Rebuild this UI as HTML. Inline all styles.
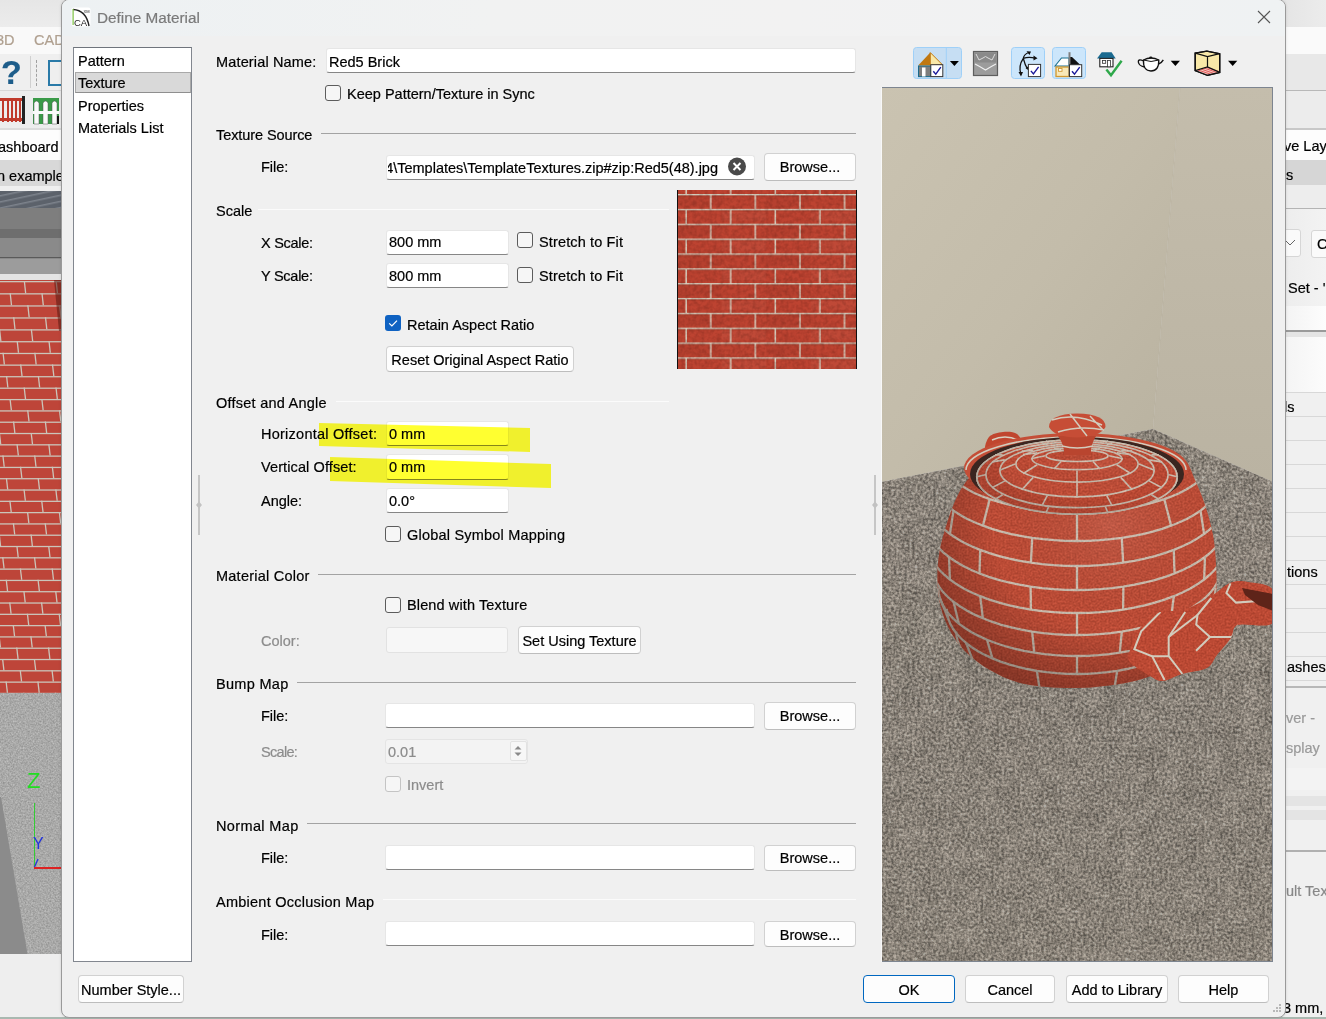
<!DOCTYPE html><html><head><meta charset="utf-8"><style>
html,body{margin:0;padding:0;}
body{width:1326px;height:1019px;overflow:hidden;position:relative;background:#e9e9e9;font-family:"Liberation Sans",sans-serif;font-size:14.5px;color:#000;}
.t{position:absolute;line-height:17px;white-space:pre;-webkit-text-stroke:0.2px currentColor;}
</style></head><body>
<div style="position:absolute;left:0;top:0;width:70px;height:1019px;overflow:hidden">
<div style="position:absolute;left:0px;top:0px;width:70px;height:27px;background:linear-gradient(#e6e6e6,#ececec);"></div>
<div style="position:absolute;left:0px;top:27px;width:70px;height:27px;background:#f9f9f9;"></div>
<div class="t" style="left:-4px;top:32px;color:#b0a090;">3D</div>
<div class="t" style="left:34px;top:32px;color:#b0a090;">CAD</div>
<div style="position:absolute;left:0px;top:54px;width:70px;height:36px;background:#efefef;"></div>
<div class="t" style="left:1px;top:53px;font-size:34px;line-height:38px;font-weight:bold;color:#1d5d8a">?</div>
<div style="position:absolute;left:30px;top:56px;width:1px;height:32px;background:#d0d0d0;"></div>
<div style="position:absolute;left:36px;top:60px;width:1px;height:26px;border-left:1px dashed #a0a0a0;"></div>
<div style="position:absolute;left:48px;top:60px;width:22px;height:26px;border:2px solid #2a7aa8;border-right:none;box-sizing:border-box;"></div>
<div style="position:absolute;left:0px;top:90px;width:70px;height:1px;background:#d8d8d8;"></div>
<div style="position:absolute;left:0px;top:91px;width:70px;height:37px;background:#ededed;"></div>
<svg style="position:absolute;left:0;top:96px" width="26" height="30"><rect x="0" y="2" width="24" height="3" fill="#c0392b"/><rect x="0" y="22" width="24" height="3" fill="#c0392b"/><rect x="2" y="2" width="2" height="24" fill="#c0392b"/><rect x="7" y="2" width="2" height="24" fill="#c0392b"/><rect x="11" y="2" width="2" height="24" fill="#c0392b"/><rect x="15" y="2" width="2" height="24" fill="#c0392b"/><rect x="19" y="2" width="2" height="24" fill="#c0392b"/><rect x="22" y="0" width="3" height="28" fill="#222"/></svg>
<svg style="position:absolute;left:33px;top:98px" width="28" height="28"><rect x="0" y="0" width="26" height="26" fill="#3a9a48"/><path d="M1 26 L1 5 Q3.5 1 6 5 L6 26 Z" fill="#fafafa" stroke="#555" stroke-width="0.5"/><path d="M10 26 L10 5 Q12.5 1 15 5 L15 26 Z" fill="#fafafa" stroke="#555" stroke-width="0.5"/><path d="M19 26 L19 5 Q21.5 1 24 5 L24 26 Z" fill="#fafafa" stroke="#555" stroke-width="0.5"/><rect x="0" y="13" width="26" height="3" fill="#fafafa"/><rect x="24" y="18" width="2" height="8" fill="#111"/></svg>
<div style="position:absolute;left:0px;top:128px;width:70px;height:2px;background:#dcdcdc;"></div>
<div style="position:absolute;left:0px;top:130px;width:70px;height:30px;background:#fdfdfd;"></div>
<div class="t" style="left:-2px;top:139px;">ashboard</div>
<div style="position:absolute;left:0px;top:160px;width:70px;height:26px;background:#d8d8d8;"></div>
<div class="t" style="left:-3px;top:168px;">n example</div>
<div style="position:absolute;left:0px;top:186px;width:70px;height:5px;background:#efefef;"></div>
<svg style="position:absolute;left:0;top:191px" width="70" height="830"><defs><pattern id="roofp" width="10" height="6" patternUnits="userSpaceOnUse" patternTransform="rotate(-12)"><rect width="10" height="6" fill="#5c626b"/><rect y="4" width="10" height="1.5" fill="#7d838c"/></pattern><pattern id="brickL2" width="68" height="25" patternUnits="userSpaceOnUse" x="0" y="89"><rect width="68" height="25" fill="#bb4a38"/><rect x="0" y="1.88" width="34.00" height="8.75" fill="#000" opacity="0.04"/><rect x="34.00" y="15.00" width="34.00" height="7.50" fill="#fff" opacity="0.03"/><rect x="0" y="0.00" width="68" height="1.3" fill="#d2cbc0"/><rect x="0" y="1.30" width="68" height="0.7" fill="#6a2418" opacity="0.5"/><rect x="0" y="12.50" width="68" height="1.3" fill="#d2cbc0"/><rect x="0" y="13.80" width="68" height="0.7" fill="#6a2418" opacity="0.5"/><rect x="12.00" y="0" width="1.3" height="12.50" fill="#d2cbc0"/><rect x="46.00" y="0" width="1.3" height="12.50" fill="#d2cbc0"/><rect x="29.00" y="12.50" width="1.3" height="12.50" fill="#d2cbc0"/><rect x="63.00" y="12.50" width="1.3" height="12.50" fill="#d2cbc0"/></pattern></defs><rect x="0" y="0" width="70" height="17" fill="url(#roofp)"/><rect x="0" y="17" width="70" height="30" fill="#7e7e7e"/><rect x="0" y="38" width="70" height="9" fill="#6e6e6e"/><rect x="0" y="47" width="70" height="21" fill="#8a8a8a"/><rect x="0" y="66" width="70" height="1" fill="#5a5a5a"/><rect x="0" y="68" width="70" height="15" fill="#9c9c9c"/><rect x="0" y="83" width="70" height="6" fill="#e4e4e4"/><rect x="0" y="89" width="70" height="413" fill="#bd4539"/><rect x="0" y="90.00" width="70" height="1.3" fill="#cbc5ba"/><rect x="0" y="91.30" width="70" height="10.90" fill="#e05040" opacity="0.00"/><path d="M-8.10 90.00 L-6.80 90.00 L-5.50 102.20 L-6.80 102.20 Z" fill="#cbc5ba"/><path d="M23.70 90.00 L25.00 90.00 L26.30 102.20 L25.00 102.20 Z" fill="#cbc5ba"/><path d="M55.50 90.00 L56.80 90.00 L58.10 102.20 L56.80 102.20 Z" fill="#cbc5ba"/><rect x="0" y="102.20" width="70" height="1.3" fill="#cbc5ba"/><rect x="0" y="103.50" width="70" height="10.81" fill="#e05040" opacity="0.02"/><path d="M-22.25 102.20 L-20.95 102.20 L-19.65 114.31 L-20.95 114.31 Z" fill="#cbc5ba"/><path d="M9.55 102.20 L10.85 102.20 L12.15 114.31 L10.85 114.31 Z" fill="#cbc5ba"/><path d="M41.35 102.20 L42.65 102.20 L43.95 114.31 L42.65 114.31 Z" fill="#cbc5ba"/><rect x="0" y="114.31" width="70" height="1.3" fill="#cbc5ba"/><rect x="0" y="115.61" width="70" height="10.72" fill="#e05040" opacity="0.04"/><path d="M-4.60 114.31 L-3.30 114.31 L-2.00 126.33 L-3.30 126.33 Z" fill="#cbc5ba"/><path d="M27.20 114.31 L28.50 114.31 L29.80 126.33 L28.50 126.33 Z" fill="#cbc5ba"/><path d="M59.00 114.31 L60.30 114.31 L61.60 126.33 L60.30 126.33 Z" fill="#cbc5ba"/><rect x="0" y="126.33" width="70" height="1.3" fill="#cbc5ba"/><rect x="0" y="127.63" width="70" height="10.63" fill="#e05040" opacity="0.06"/><path d="M-18.75 126.33 L-17.45 126.33 L-16.15 138.25 L-17.45 138.25 Z" fill="#cbc5ba"/><path d="M13.05 126.33 L14.35 126.33 L15.65 138.25 L14.35 138.25 Z" fill="#cbc5ba"/><path d="M44.85 126.33 L46.15 126.33 L47.45 138.25 L46.15 138.25 Z" fill="#cbc5ba"/><rect x="0" y="138.25" width="70" height="1.3" fill="#cbc5ba"/><rect x="0" y="139.55" width="70" height="10.54" fill="#e05040" opacity="0.01"/><path d="M-1.10 138.25 L0.20 138.25 L1.50 150.09 L0.20 150.09 Z" fill="#cbc5ba"/><path d="M30.70 138.25 L32.00 138.25 L33.30 150.09 L32.00 150.09 Z" fill="#cbc5ba"/><path d="M62.50 138.25 L63.80 138.25 L65.10 150.09 L63.80 150.09 Z" fill="#cbc5ba"/><rect x="0" y="150.09" width="70" height="1.3" fill="#cbc5ba"/><rect x="0" y="151.39" width="70" height="10.45" fill="#e05040" opacity="0.03"/><path d="M-15.25 150.09 L-13.95 150.09 L-12.65 161.84 L-13.95 161.84 Z" fill="#cbc5ba"/><path d="M16.55 150.09 L17.85 150.09 L19.15 161.84 L17.85 161.84 Z" fill="#cbc5ba"/><path d="M48.35 150.09 L49.65 150.09 L50.95 161.84 L49.65 161.84 Z" fill="#cbc5ba"/><rect x="0" y="161.84" width="70" height="1.3" fill="#cbc5ba"/><rect x="0" y="163.14" width="70" height="10.36" fill="#e05040" opacity="0.05"/><path d="M-29.40 161.84 L-28.10 161.84 L-26.80 173.50 L-28.10 173.50 Z" fill="#cbc5ba"/><path d="M2.40 161.84 L3.70 161.84 L5.00 173.50 L3.70 173.50 Z" fill="#cbc5ba"/><path d="M34.20 161.84 L35.50 161.84 L36.80 173.50 L35.50 173.50 Z" fill="#cbc5ba"/><path d="M66.00 161.84 L67.30 161.84 L68.60 173.50 L67.30 173.50 Z" fill="#cbc5ba"/><rect x="0" y="173.50" width="70" height="1.3" fill="#cbc5ba"/><rect x="0" y="174.80" width="70" height="10.27" fill="#e05040" opacity="0.00"/><path d="M-11.75 173.50 L-10.45 173.50 L-9.15 185.08 L-10.45 185.08 Z" fill="#cbc5ba"/><path d="M20.05 173.50 L21.35 173.50 L22.65 185.08 L21.35 185.08 Z" fill="#cbc5ba"/><path d="M51.85 173.50 L53.15 173.50 L54.45 185.08 L53.15 185.08 Z" fill="#cbc5ba"/><rect x="0" y="185.08" width="70" height="1.3" fill="#cbc5ba"/><rect x="0" y="186.38" width="70" height="10.19" fill="#e05040" opacity="0.02"/><path d="M-25.90 185.08 L-24.60 185.08 L-23.30 196.56 L-24.60 196.56 Z" fill="#cbc5ba"/><path d="M5.90 185.08 L7.20 185.08 L8.50 196.56 L7.20 196.56 Z" fill="#cbc5ba"/><path d="M37.70 185.08 L39.00 185.08 L40.30 196.56 L39.00 196.56 Z" fill="#cbc5ba"/><path d="M69.50 185.08 L70.80 185.08 L72.10 196.56 L70.80 196.56 Z" fill="#cbc5ba"/><rect x="0" y="196.56" width="70" height="1.3" fill="#cbc5ba"/><rect x="0" y="197.86" width="70" height="10.10" fill="#e05040" opacity="0.04"/><path d="M-8.25 196.56 L-6.95 196.56 L-5.65 207.96 L-6.95 207.96 Z" fill="#cbc5ba"/><path d="M23.55 196.56 L24.85 196.56 L26.15 207.96 L24.85 207.96 Z" fill="#cbc5ba"/><path d="M55.35 196.56 L56.65 196.56 L57.95 207.96 L56.65 207.96 Z" fill="#cbc5ba"/><rect x="0" y="207.96" width="70" height="1.3" fill="#cbc5ba"/><rect x="0" y="209.26" width="70" height="10.02" fill="#e05040" opacity="0.06"/><path d="M-22.40 207.96 L-21.10 207.96 L-19.80 219.28 L-21.10 219.28 Z" fill="#cbc5ba"/><path d="M9.40 207.96 L10.70 207.96 L12.00 219.28 L10.70 219.28 Z" fill="#cbc5ba"/><path d="M41.20 207.96 L42.50 207.96 L43.80 219.28 L42.50 219.28 Z" fill="#cbc5ba"/><rect x="0" y="219.28" width="70" height="1.3" fill="#cbc5ba"/><rect x="0" y="220.58" width="70" height="10.00" fill="#e05040" opacity="0.01"/><path d="M-4.75 219.28 L-3.45 219.28 L-2.15 230.58 L-3.45 230.58 Z" fill="#cbc5ba"/><path d="M27.05 219.28 L28.35 219.28 L29.65 230.58 L28.35 230.58 Z" fill="#cbc5ba"/><path d="M58.85 219.28 L60.15 219.28 L61.45 230.58 L60.15 230.58 Z" fill="#cbc5ba"/><rect x="0" y="230.58" width="70" height="1.3" fill="#cbc5ba"/><rect x="0" y="231.88" width="70" height="10.00" fill="#e05040" opacity="0.03"/><path d="M-18.90 230.58 L-17.60 230.58 L-16.30 241.88 L-17.60 241.88 Z" fill="#cbc5ba"/><path d="M12.90 230.58 L14.20 230.58 L15.50 241.88 L14.20 241.88 Z" fill="#cbc5ba"/><path d="M44.70 230.58 L46.00 230.58 L47.30 241.88 L46.00 241.88 Z" fill="#cbc5ba"/><rect x="0" y="241.88" width="70" height="1.3" fill="#cbc5ba"/><rect x="0" y="243.18" width="70" height="10.00" fill="#e05040" opacity="0.05"/><path d="M-1.25 241.88 L0.05 241.88 L1.35 253.18 L0.05 253.18 Z" fill="#cbc5ba"/><path d="M30.55 241.88 L31.85 241.88 L33.15 253.18 L31.85 253.18 Z" fill="#cbc5ba"/><path d="M62.35 241.88 L63.65 241.88 L64.95 253.18 L63.65 253.18 Z" fill="#cbc5ba"/><rect x="0" y="253.18" width="70" height="1.3" fill="#cbc5ba"/><rect x="0" y="254.48" width="70" height="10.00" fill="#e05040" opacity="0.00"/><path d="M-15.40 253.18 L-14.10 253.18 L-12.80 264.48 L-14.10 264.48 Z" fill="#cbc5ba"/><path d="M16.40 253.18 L17.70 253.18 L19.00 264.48 L17.70 264.48 Z" fill="#cbc5ba"/><path d="M48.20 253.18 L49.50 253.18 L50.80 264.48 L49.50 264.48 Z" fill="#cbc5ba"/><rect x="0" y="264.48" width="70" height="1.3" fill="#cbc5ba"/><rect x="0" y="265.78" width="70" height="10.00" fill="#e05040" opacity="0.02"/><path d="M-29.55 264.48 L-28.25 264.48 L-26.95 275.78 L-28.25 275.78 Z" fill="#cbc5ba"/><path d="M2.25 264.48 L3.55 264.48 L4.85 275.78 L3.55 275.78 Z" fill="#cbc5ba"/><path d="M34.05 264.48 L35.35 264.48 L36.65 275.78 L35.35 275.78 Z" fill="#cbc5ba"/><path d="M65.85 264.48 L67.15 264.48 L68.45 275.78 L67.15 275.78 Z" fill="#cbc5ba"/><rect x="0" y="275.78" width="70" height="1.3" fill="#cbc5ba"/><rect x="0" y="277.08" width="70" height="10.00" fill="#e05040" opacity="0.04"/><path d="M-11.90 275.78 L-10.60 275.78 L-9.30 287.08 L-10.60 287.08 Z" fill="#cbc5ba"/><path d="M19.90 275.78 L21.20 275.78 L22.50 287.08 L21.20 287.08 Z" fill="#cbc5ba"/><path d="M51.70 275.78 L53.00 275.78 L54.30 287.08 L53.00 287.08 Z" fill="#cbc5ba"/><rect x="0" y="287.08" width="70" height="1.3" fill="#cbc5ba"/><rect x="0" y="288.38" width="70" height="10.00" fill="#e05040" opacity="0.06"/><path d="M-26.05 287.08 L-24.75 287.08 L-23.45 298.38 L-24.75 298.38 Z" fill="#cbc5ba"/><path d="M5.75 287.08 L7.05 287.08 L8.35 298.38 L7.05 298.38 Z" fill="#cbc5ba"/><path d="M37.55 287.08 L38.85 287.08 L40.15 298.38 L38.85 298.38 Z" fill="#cbc5ba"/><path d="M69.35 287.08 L70.65 287.08 L71.95 298.38 L70.65 298.38 Z" fill="#cbc5ba"/><rect x="0" y="298.38" width="70" height="1.3" fill="#cbc5ba"/><rect x="0" y="299.68" width="70" height="10.00" fill="#e05040" opacity="0.01"/><path d="M-8.40 298.38 L-7.10 298.38 L-5.80 309.68 L-7.10 309.68 Z" fill="#cbc5ba"/><path d="M23.40 298.38 L24.70 298.38 L26.00 309.68 L24.70 309.68 Z" fill="#cbc5ba"/><path d="M55.20 298.38 L56.50 298.38 L57.80 309.68 L56.50 309.68 Z" fill="#cbc5ba"/><rect x="0" y="309.68" width="70" height="1.3" fill="#cbc5ba"/><rect x="0" y="310.98" width="70" height="10.00" fill="#e05040" opacity="0.03"/><path d="M-22.55 309.68 L-21.25 309.68 L-19.95 320.98 L-21.25 320.98 Z" fill="#cbc5ba"/><path d="M9.25 309.68 L10.55 309.68 L11.85 320.98 L10.55 320.98 Z" fill="#cbc5ba"/><path d="M41.05 309.68 L42.35 309.68 L43.65 320.98 L42.35 320.98 Z" fill="#cbc5ba"/><rect x="0" y="320.98" width="70" height="1.3" fill="#cbc5ba"/><rect x="0" y="322.28" width="70" height="10.00" fill="#e05040" opacity="0.05"/><path d="M-4.90 320.98 L-3.60 320.98 L-2.30 332.28 L-3.60 332.28 Z" fill="#cbc5ba"/><path d="M26.90 320.98 L28.20 320.98 L29.50 332.28 L28.20 332.28 Z" fill="#cbc5ba"/><path d="M58.70 320.98 L60.00 320.98 L61.30 332.28 L60.00 332.28 Z" fill="#cbc5ba"/><rect x="0" y="332.28" width="70" height="1.3" fill="#cbc5ba"/><rect x="0" y="333.58" width="70" height="10.00" fill="#e05040" opacity="0.00"/><path d="M-19.05 332.28 L-17.75 332.28 L-16.45 343.58 L-17.75 343.58 Z" fill="#cbc5ba"/><path d="M12.75 332.28 L14.05 332.28 L15.35 343.58 L14.05 343.58 Z" fill="#cbc5ba"/><path d="M44.55 332.28 L45.85 332.28 L47.15 343.58 L45.85 343.58 Z" fill="#cbc5ba"/><rect x="0" y="343.58" width="70" height="1.3" fill="#cbc5ba"/><rect x="0" y="344.88" width="70" height="10.00" fill="#e05040" opacity="0.02"/><path d="M-1.40 343.58 L-0.10 343.58 L1.20 354.88 L-0.10 354.88 Z" fill="#cbc5ba"/><path d="M30.40 343.58 L31.70 343.58 L33.00 354.88 L31.70 354.88 Z" fill="#cbc5ba"/><path d="M62.20 343.58 L63.50 343.58 L64.80 354.88 L63.50 354.88 Z" fill="#cbc5ba"/><rect x="0" y="354.88" width="70" height="1.3" fill="#cbc5ba"/><rect x="0" y="356.18" width="70" height="10.00" fill="#e05040" opacity="0.04"/><path d="M-15.55 354.88 L-14.25 354.88 L-12.95 366.18 L-14.25 366.18 Z" fill="#cbc5ba"/><path d="M16.25 354.88 L17.55 354.88 L18.85 366.18 L17.55 366.18 Z" fill="#cbc5ba"/><path d="M48.05 354.88 L49.35 354.88 L50.65 366.18 L49.35 366.18 Z" fill="#cbc5ba"/><rect x="0" y="366.18" width="70" height="1.3" fill="#cbc5ba"/><rect x="0" y="367.48" width="70" height="10.00" fill="#e05040" opacity="0.06"/><path d="M-29.70 366.18 L-28.40 366.18 L-27.10 377.48 L-28.40 377.48 Z" fill="#cbc5ba"/><path d="M2.10 366.18 L3.40 366.18 L4.70 377.48 L3.40 377.48 Z" fill="#cbc5ba"/><path d="M33.90 366.18 L35.20 366.18 L36.50 377.48 L35.20 377.48 Z" fill="#cbc5ba"/><path d="M65.70 366.18 L67.00 366.18 L68.30 377.48 L67.00 377.48 Z" fill="#cbc5ba"/><rect x="0" y="377.48" width="70" height="1.3" fill="#cbc5ba"/><rect x="0" y="378.78" width="70" height="10.00" fill="#e05040" opacity="0.01"/><path d="M-12.05 377.48 L-10.75 377.48 L-9.45 388.78 L-10.75 388.78 Z" fill="#cbc5ba"/><path d="M19.75 377.48 L21.05 377.48 L22.35 388.78 L21.05 388.78 Z" fill="#cbc5ba"/><path d="M51.55 377.48 L52.85 377.48 L54.15 388.78 L52.85 388.78 Z" fill="#cbc5ba"/><rect x="0" y="388.78" width="70" height="1.3" fill="#cbc5ba"/><rect x="0" y="390.08" width="70" height="10.00" fill="#e05040" opacity="0.03"/><path d="M-26.20 388.78 L-24.90 388.78 L-23.60 400.08 L-24.90 400.08 Z" fill="#cbc5ba"/><path d="M5.60 388.78 L6.90 388.78 L8.20 400.08 L6.90 400.08 Z" fill="#cbc5ba"/><path d="M37.40 388.78 L38.70 388.78 L40.00 400.08 L38.70 400.08 Z" fill="#cbc5ba"/><path d="M69.20 388.78 L70.50 388.78 L71.80 400.08 L70.50 400.08 Z" fill="#cbc5ba"/><rect x="0" y="400.08" width="70" height="1.3" fill="#cbc5ba"/><rect x="0" y="401.38" width="70" height="10.00" fill="#e05040" opacity="0.05"/><path d="M-8.55 400.08 L-7.25 400.08 L-5.95 411.38 L-7.25 411.38 Z" fill="#cbc5ba"/><path d="M23.25 400.08 L24.55 400.08 L25.85 411.38 L24.55 411.38 Z" fill="#cbc5ba"/><path d="M55.05 400.08 L56.35 400.08 L57.65 411.38 L56.35 411.38 Z" fill="#cbc5ba"/><rect x="0" y="411.38" width="70" height="1.3" fill="#cbc5ba"/><rect x="0" y="412.68" width="70" height="10.00" fill="#e05040" opacity="0.00"/><path d="M-22.70 411.38 L-21.40 411.38 L-20.10 422.68 L-21.40 422.68 Z" fill="#cbc5ba"/><path d="M9.10 411.38 L10.40 411.38 L11.70 422.68 L10.40 422.68 Z" fill="#cbc5ba"/><path d="M40.90 411.38 L42.20 411.38 L43.50 422.68 L42.20 422.68 Z" fill="#cbc5ba"/><rect x="0" y="422.68" width="70" height="1.3" fill="#cbc5ba"/><rect x="0" y="423.98" width="70" height="10.00" fill="#e05040" opacity="0.02"/><path d="M-5.05 422.68 L-3.75 422.68 L-2.45 433.98 L-3.75 433.98 Z" fill="#cbc5ba"/><path d="M26.75 422.68 L28.05 422.68 L29.35 433.98 L28.05 433.98 Z" fill="#cbc5ba"/><path d="M58.55 422.68 L59.85 422.68 L61.15 433.98 L59.85 433.98 Z" fill="#cbc5ba"/><rect x="0" y="433.98" width="70" height="1.3" fill="#cbc5ba"/><rect x="0" y="435.28" width="70" height="10.00" fill="#e05040" opacity="0.04"/><path d="M-19.20 433.98 L-17.90 433.98 L-16.60 445.28 L-17.90 445.28 Z" fill="#cbc5ba"/><path d="M12.60 433.98 L13.90 433.98 L15.20 445.28 L13.90 445.28 Z" fill="#cbc5ba"/><path d="M44.40 433.98 L45.70 433.98 L47.00 445.28 L45.70 445.28 Z" fill="#cbc5ba"/><rect x="0" y="445.28" width="70" height="1.3" fill="#cbc5ba"/><rect x="0" y="446.58" width="70" height="10.00" fill="#e05040" opacity="0.06"/><path d="M-1.55 445.28 L-0.25 445.28 L1.05 456.58 L-0.25 456.58 Z" fill="#cbc5ba"/><path d="M30.25 445.28 L31.55 445.28 L32.85 456.58 L31.55 456.58 Z" fill="#cbc5ba"/><path d="M62.05 445.28 L63.35 445.28 L64.65 456.58 L63.35 456.58 Z" fill="#cbc5ba"/><rect x="0" y="456.58" width="70" height="1.3" fill="#cbc5ba"/><rect x="0" y="457.88" width="70" height="10.00" fill="#e05040" opacity="0.01"/><path d="M-15.70 456.58 L-14.40 456.58 L-13.10 467.88 L-14.40 467.88 Z" fill="#cbc5ba"/><path d="M16.10 456.58 L17.40 456.58 L18.70 467.88 L17.40 467.88 Z" fill="#cbc5ba"/><path d="M47.90 456.58 L49.20 456.58 L50.50 467.88 L49.20 467.88 Z" fill="#cbc5ba"/><rect x="0" y="467.88" width="70" height="1.3" fill="#cbc5ba"/><rect x="0" y="469.18" width="70" height="10.00" fill="#e05040" opacity="0.03"/><path d="M-29.85 467.88 L-28.55 467.88 L-27.25 479.18 L-28.55 479.18 Z" fill="#cbc5ba"/><path d="M1.95 467.88 L3.25 467.88 L4.55 479.18 L3.25 479.18 Z" fill="#cbc5ba"/><path d="M33.75 467.88 L35.05 467.88 L36.35 479.18 L35.05 479.18 Z" fill="#cbc5ba"/><path d="M65.55 467.88 L66.85 467.88 L68.15 479.18 L66.85 479.18 Z" fill="#cbc5ba"/><rect x="0" y="479.18" width="70" height="1.3" fill="#cbc5ba"/><rect x="0" y="480.48" width="70" height="10.00" fill="#e05040" opacity="0.05"/><path d="M-12.20 479.18 L-10.90 479.18 L-9.60 490.48 L-10.90 490.48 Z" fill="#cbc5ba"/><path d="M19.60 479.18 L20.90 479.18 L22.20 490.48 L20.90 490.48 Z" fill="#cbc5ba"/><path d="M51.40 479.18 L52.70 479.18 L54.00 490.48 L52.70 490.48 Z" fill="#cbc5ba"/><rect x="0" y="490.48" width="70" height="1.3" fill="#cbc5ba"/><rect x="0" y="491.78" width="70" height="10.00" fill="#e05040" opacity="0.00"/><path d="M-26.35 490.48 L-25.05 490.48 L-23.75 501.78 L-25.05 501.78 Z" fill="#cbc5ba"/><path d="M5.45 490.48 L6.75 490.48 L8.05 501.78 L6.75 501.78 Z" fill="#cbc5ba"/><path d="M37.25 490.48 L38.55 490.48 L39.85 501.78 L38.55 501.78 Z" fill="#cbc5ba"/><path d="M69.05 490.48 L70.35 490.48 L71.65 501.78 L70.35 501.78 Z" fill="#cbc5ba"/><rect x="0" y="501.78" width="70" height="1.3" fill="#cbc5ba"/><rect x="0" y="503.08" width="70" height="10.00" fill="#e05040" opacity="0.02"/><path d="M-8.70 501.78 L-7.40 501.78 L-6.10 513.08 L-7.40 513.08 Z" fill="#cbc5ba"/><path d="M23.10 501.78 L24.40 501.78 L25.70 513.08 L24.40 513.08 Z" fill="#cbc5ba"/><path d="M54.90 501.78 L56.20 501.78 L57.50 513.08 L56.20 513.08 Z" fill="#cbc5ba"/><polygon points="54,89 62,89 62,140 59,140" fill="#5a1a12" opacity="0.55"/><rect x="0" y="502" width="70" height="261" fill="#b3b3b1"/><filter id="cn" x="0" y="0" width="100%" height="100%" color-interpolation-filters="sRGB"><feTurbulence type="fractalNoise" baseFrequency="0.6" numOctaves="2" seed="21" result="t"/><feColorMatrix in="t" type="matrix" values="1.5 0 0 0 -0.25  1.5 0 0 0 -0.25  1.5 0 0 0 -0.25  0 0 0 0 0.18" result="c"/><feComposite in="c" in2="SourceGraphic" operator="in"/></filter><rect x="0" y="502" width="70" height="261" fill="#000" filter="url(#cn)"/><polygon points="0,606 1,606 27.5,763 0,763" fill="#8b8b8b"/><rect x="0" y="763" width="70" height="70" fill="#eeeeee"/></svg>
<div class="t" style="left:27px;top:769px;font-size:22px;line-height:24px;color:#22dd22;-webkit-text-stroke:0">Z</div>
<div style="position:absolute;left:34px;top:803px;width:1px;height:65px;background:#33cc33;"></div>
<div class="t" style="left:33px;top:834px;font-size:16px;line-height:19px;color:#2233dd;-webkit-text-stroke:0">Y</div>
<svg style="position:absolute;left:33px;top:856px" width="8" height="12"><path d="M1.5 11 L5 3" stroke="#2233dd" stroke-width="1.2"/></svg>
<div style="position:absolute;left:34px;top:867px;width:36px;height:2px;background:#dd2222;"></div>
</div>
<div style="position:absolute;left:1280px;top:0;width:46px;height:1019px;overflow:hidden;background:#f0f0f0">
<div style="position:absolute;left:0px;top:0px;width:46px;height:27px;background:linear-gradient(90deg,#e4e4e4,#ececec);"></div>
<div style="position:absolute;left:0px;top:27px;width:46px;height:27px;background:#fafafa;"></div>
<div style="position:absolute;left:0px;top:54px;width:46px;height:36px;background:#e8e8e8;"></div>
<div style="position:absolute;left:0px;top:90px;width:46px;height:1px;background:#b8b8b8;"></div>
<div style="position:absolute;left:0px;top:91px;width:46px;height:37px;background:#ececec;"></div>
<div style="position:absolute;left:0px;top:128px;width:46px;height:2px;background:#c8c8c8;"></div>
<div style="position:absolute;left:0px;top:130px;width:46px;height:30px;background:#fdfdfd;"></div>
<div class="t" style="left:4px;top:138px">ve Laye</div>
<div style="position:absolute;left:0px;top:160px;width:46px;height:25px;background:#d6d6d6;"></div>
<div class="t" style="left:-2px;top:167px">ns</div>
<div style="position:absolute;left:0px;top:185px;width:46px;height:23px;background:#ededed;"></div>
<div style="position:absolute;left:0px;top:208px;width:46px;height:1px;background:#b4b4b4;"></div>
<div style="position:absolute;left:0px;top:209px;width:46px;height:97px;background:linear-gradient(90deg,#ececec,#f3f3f3);"></div>
<div style="position:absolute;left:-10px;top:229px;width:31px;height:28px;background:#fafafa;border:1px solid #d6d6d6;border-radius:3px;box-sizing:border-box;"></div>
<svg style="position:absolute;left:3px;top:238px" width="14" height="10"><path d="M2 2 L7 7 L12 2" stroke="#666" fill="none"/></svg>
<div style="position:absolute;left:31px;top:230px;width:29px;height:28px;background:#fafafa;border:1px solid #d6d6d6;border-radius:3px;box-sizing:border-box;"></div>
<div class="t" style="left:37px;top:236px">C</div>
<div class="t" style="left:8px;top:280px">Set - '</div>
<div style="position:absolute;left:0px;top:306px;width:46px;height:24px;background:linear-gradient(90deg,#f2f2f2,#fdfdfd);"></div>
<div style="position:absolute;left:0px;top:330px;width:46px;height:2px;background:#9a9a9a;"></div>
<div style="position:absolute;left:0px;top:332px;width:46px;height:5px;background:#e4e4e4;"></div>
<div style="position:absolute;left:0px;top:337px;width:46px;height:55px;background:linear-gradient(90deg,#f3f3f3,#fcfcfc);"></div>
<div style="position:absolute;left:0px;top:392px;width:46px;height:1px;background:#d8d8d8;"></div>
<div style="position:absolute;left:0px;top:416px;width:46px;height:1px;background:#d8d8d8;"></div>
<div style="position:absolute;left:0px;top:440px;width:46px;height:1px;background:#d8d8d8;"></div>
<div style="position:absolute;left:0px;top:464px;width:46px;height:1px;background:#d8d8d8;"></div>
<div style="position:absolute;left:0px;top:488px;width:46px;height:1px;background:#d8d8d8;"></div>
<div style="position:absolute;left:0px;top:512px;width:46px;height:1px;background:#d8d8d8;"></div>
<div style="position:absolute;left:0px;top:536px;width:46px;height:1px;background:#d8d8d8;"></div>
<div style="position:absolute;left:0px;top:560px;width:46px;height:1px;background:#d8d8d8;"></div>
<div style="position:absolute;left:0px;top:584px;width:46px;height:1px;background:#d8d8d8;"></div>
<div style="position:absolute;left:0px;top:608px;width:46px;height:1px;background:#d8d8d8;"></div>
<div style="position:absolute;left:0px;top:632px;width:46px;height:1px;background:#d8d8d8;"></div>
<div style="position:absolute;left:0px;top:656px;width:46px;height:1px;background:#d8d8d8;"></div>
<div style="position:absolute;left:0px;top:680px;width:46px;height:1px;background:#d8d8d8;"></div>
<div class="t" style="left:4px;top:399px">ls</div>
<div class="t" style="left:7px;top:564px">tions</div>
<div class="t" style="left:7px;top:659px">ashes</div>
<div style="position:absolute;left:0px;top:686px;width:46px;height:2px;background:#b8b8b8;"></div>
<div class="t" style="left:6px;top:710px;color:#9a9a9a">ver -</div>
<div class="t" style="left:6px;top:740px;color:#9a9a9a">splay</div>
<div style="position:absolute;left:0px;top:768px;width:46px;height:22px;background:#f3f3f3;"></div>
<div style="position:absolute;left:0px;top:796px;width:46px;height:10px;background:#e4e4e4;"></div>
<div style="position:absolute;left:0px;top:810px;width:46px;height:10px;background:#e4e4e4;"></div>
<div style="position:absolute;left:0px;top:850px;width:46px;height:2px;background:#b0b0b0;"></div>
<div class="t" style="left:6px;top:883px;color:#888">ult Text</div>
<div style="position:absolute;left:0px;top:900px;width:46px;height:119px;background:#f0f0f0;"></div>
<div class="t" style="left:3px;top:1000px">3 mm,</div>
</div>
<div style="position:absolute;left:0px;top:1017px;width:1326px;height:2px;background:#a9b8b0;"></div>
<div style="position:absolute;left:61px;top:-1px;width:1225px;height:1019px;border-radius:8px;background:#f0f0f0;border:1px solid #9a9a9a;box-sizing:border-box;box-shadow:0 0 3px rgba(0,0,0,0.12);overflow:hidden"><div style="position:absolute;left:0;top:0;width:100%;height:36px;background:linear-gradient(90deg,#edf1f3 0%,#f1f2f2 35%,#f2f2f2 60%,#eff2f3 100%)"></div></div>
<svg style="position:absolute;left:71px;top:7px" width="21" height="21"><rect x="0.5" y="0.5" width="19" height="19" rx="2" fill="#fff"/><path d="M2 2.5 Q15 3 18 19" stroke="#222" stroke-width="1.4" fill="none"/><rect x="1.5" y="2" width="1.2" height="16" fill="#7cc242"/><text x="3" y="18.5" font-family="Liberation Sans" font-size="9.5" fill="#222">CA</text><text x="12.5" y="6" font-family="Liberation Sans" font-size="4" fill="#222">XM</text></svg>
<div class="t" style="left:97px;top:9px;color:#7a7a7a;font-size:15.3px;">Define Material</div>
<svg style="position:absolute;left:1257px;top:10px" width="14" height="14"><path d="M1 1 L13 13 M13 1 L1 13" stroke="#555" stroke-width="1.1"/></svg>
<div style="position:absolute;left:73px;top:47px;width:119px;height:915px;background:#fff;border:1px solid #82878f;border-top-color:#6f747c;box-sizing:border-box;"></div>
<div style="position:absolute;left:75px;top:72px;width:116px;height:21px;background:#d9d9d9;border:1px solid #a9a9a9;border-bottom-color:#8f8f8f;box-sizing:border-box;"></div>
<div class="t" style="left:78px;top:53px;">Pattern</div>
<div class="t" style="left:78px;top:75px;">Texture</div>
<div class="t" style="left:78px;top:98px;">Properties</div>
<div class="t" style="left:78px;top:120px;">Materials List</div>
<div style="position:absolute;left:198px;top:475px;width:2px;height:60px;background:#c6c6c6;"></div>
<div style="position:absolute;left:874px;top:475px;width:2px;height:60px;background:#c6c6c6;"></div>
<svg style="position:absolute;left:194px;top:500px" width="10" height="10"><path d="M5 1.5 L8 5 L5 8.5 L2 5 Z" fill="#c2c2c2"/></svg>
<svg style="position:absolute;left:870px;top:500px" width="10" height="10"><path d="M5 1.5 L8 5 L5 8.5 L2 5 Z" fill="#c2c2c2"/></svg>
<div class="t" style="left:216px;top:54px;letter-spacing:0.154px;">Material Name:</div>
<div style="position:absolute;left:326px;top:48px;width:530px;height:25px;background:#fff;border:1px solid #e6e6e6;border-bottom:1.5px solid #868686;border-radius:3px;box-sizing:border-box;"></div>
<div class="t" style="left:329px;top:54px;">Red5 Brick</div>
<div style="position:absolute;left:325px;top:85px;width:16px;height:16px;background:#f6f6f6;border:1px solid #5c5c5c;border-radius:3px;box-sizing:border-box;"></div>
<div class="t" style="left:347px;top:86px;">Keep Pattern/Texture in Sync</div>
<div class="t" style="left:216px;top:127px;letter-spacing:-0.085px;">Texture Source</div>
<div style="position:absolute;left:321px;top:133px;width:535px;height:1px;background:#a3a3a3;"></div>
<div class="t" style="left:261px;top:159px;">File:</div>
<div style="position:absolute;left:386px;top:155px;width:369px;height:25px;background:#fff;border:1px solid #e6e6e6;border-bottom:1.5px solid #868686;border-radius:3px;box-sizing:border-box;"></div>
<div style="position:absolute;left:388px;top:155px;width:333px;height:24px;overflow:hidden"><div class="t" style="right:3px;top:5px">C:\Program Files\Chief Architect\Chief Architect Premier X14\Templates\TemplateTextures.zip#zip:Red5(48).jpg</div></div>
<svg style="position:absolute;left:727px;top:157px" width="20" height="20"><circle cx="10" cy="9.5" r="9" fill="#4a4a4a"/><path d="M6.5 6 L13.5 13 M13.5 6 L6.5 13" stroke="#fff" stroke-width="2"/></svg>
<div style="position:absolute;left:764px;top:153px;width:92px;height:28px;background:#fdfdfd;border:1px solid #d1d1d1;border-bottom-color:#bdbdbd;border-radius:4px;box-sizing:border-box;"></div>
<div class="t" style="left:764px;width:92px;text-align:center;top:159px">Browse...</div>
<div class="t" style="left:216px;top:203px;">Scale</div>
<div style="position:absolute;left:258px;top:209px;width:411px;height:1px;background:#fbfbfb;"></div>
<div class="t" style="left:261px;top:235px;letter-spacing:-0.286px;">X Scale:</div>
<div style="position:absolute;left:386px;top:230px;width:123px;height:25px;background:#fff;border:1px solid #e6e6e6;border-bottom:1.5px solid #868686;border-radius:3px;box-sizing:border-box;"></div>
<div class="t" style="left:389px;top:234px;">800 mm</div>
<div style="position:absolute;left:517px;top:232px;width:16px;height:16px;background:#f6f6f6;border:1px solid #5c5c5c;border-radius:3px;box-sizing:border-box;"></div>
<div class="t" style="left:539px;top:234px;letter-spacing:0.138px;">Stretch to Fit</div>
<div class="t" style="left:261px;top:268px;letter-spacing:-0.257px;">Y Scale:</div>
<div style="position:absolute;left:386px;top:263px;width:123px;height:25px;background:#fff;border:1px solid #e6e6e6;border-bottom:1.5px solid #868686;border-radius:3px;box-sizing:border-box;"></div>
<div class="t" style="left:389px;top:268px;">800 mm</div>
<div style="position:absolute;left:517px;top:267px;width:16px;height:16px;background:#f6f6f6;border:1px solid #5c5c5c;border-radius:3px;box-sizing:border-box;"></div>
<div class="t" style="left:539px;top:268px;letter-spacing:0.138px;">Stretch to Fit</div>
<div style="position:absolute;left:385px;top:315px;width:16px;height:16px;background:#0f62c2;border-radius:3px"><svg width="16" height="16" style="position:absolute;left:0;top:0"><path d="M4.2 8.3 L6.9 11 L12 5.6" stroke="#fff" stroke-width="1.2" fill="none"/></svg></div>
<div class="t" style="left:407px;top:317px;">Retain Aspect Ratio</div>
<div style="position:absolute;left:386px;top:346px;width:188px;height:26px;background:#fdfdfd;border:1px solid #d1d1d1;border-bottom-color:#bdbdbd;border-radius:4px;box-sizing:border-box;"></div>
<div class="t" style="left:386px;width:188px;text-align:center;top:352px">Reset Original Aspect Ratio</div>
<div class="t" style="left:216px;top:395px;letter-spacing:0.247px;">Offset and Angle</div>
<div style="position:absolute;left:336px;top:401px;width:333px;height:1px;background:#fbfbfb;"></div>
<div class="t" style="left:261px;top:426px;letter-spacing:0.247px;">Horizontal Offset:</div>
<div style="position:absolute;left:386px;top:421px;width:123px;height:25px;background:#fff;border:1px solid #e6e6e6;border-bottom:1.5px solid #868686;border-radius:3px;box-sizing:border-box;"></div>
<div class="t" style="left:389px;top:426px;">0 mm</div>
<div class="t" style="left:261px;top:459px;letter-spacing:0.107px;">Vertical Offset:</div>
<div style="position:absolute;left:386px;top:454px;width:123px;height:26px;background:#fff;border:1px solid #e6e6e6;border-bottom:1.5px solid #868686;border-radius:3px;box-sizing:border-box;"></div>
<div class="t" style="left:389px;top:459px;">0 mm</div>
<div class="t" style="left:261px;top:493px;">Angle:</div>
<div style="position:absolute;left:386px;top:488px;width:123px;height:25px;background:#fff;border:1px solid #e6e6e6;border-bottom:1.5px solid #868686;border-radius:3px;box-sizing:border-box;"></div>
<div class="t" style="left:389px;top:493px;">0.0°</div>
<div style="position:absolute;left:385px;top:526px;width:16px;height:16px;background:#f6f6f6;border:1px solid #5c5c5c;border-radius:3px;box-sizing:border-box;"></div>
<div class="t" style="left:407px;top:527px;letter-spacing:0.210px;">Global Symbol Mapping</div>
<div class="t" style="left:216px;top:568px;letter-spacing:0.238px;">Material Color</div>
<div style="position:absolute;left:318px;top:574px;width:538px;height:1px;background:#a3a3a3;"></div>
<div style="position:absolute;left:385px;top:597px;width:16px;height:16px;background:#f6f6f6;border:1px solid #5c5c5c;border-radius:3px;box-sizing:border-box;"></div>
<div class="t" style="left:407px;top:597px;letter-spacing:0.118px;">Blend with Texture</div>
<div class="t" style="left:261px;top:633px;color:#8c8c8c;">Color:</div>
<div style="position:absolute;left:386px;top:627px;width:122px;height:26px;background:#f7f7f7;border:1px solid #e2e2e2;border-radius:3px;box-sizing:border-box;"></div>
<div style="position:absolute;left:518px;top:626px;width:123px;height:28px;background:#fdfdfd;border:1px solid #d1d1d1;border-bottom-color:#bdbdbd;border-radius:4px;box-sizing:border-box;"></div>
<div class="t" style="left:518px;width:123px;text-align:center;top:633px">Set Using Texture</div>
<div class="t" style="left:216px;top:676px;letter-spacing:0.300px;">Bump Map</div>
<div style="position:absolute;left:297px;top:682px;width:559px;height:1px;background:#a3a3a3;"></div>
<div class="t" style="left:261px;top:708px;">File:</div>
<div style="position:absolute;left:385px;top:703px;width:370px;height:25px;background:#fff;border:1px solid #e6e6e6;border-bottom:1.5px solid #868686;border-radius:3px;box-sizing:border-box;"></div>
<div style="position:absolute;left:764px;top:702px;width:92px;height:28px;background:#fdfdfd;border:1px solid #d1d1d1;border-bottom-color:#bdbdbd;border-radius:4px;box-sizing:border-box;"></div>
<div class="t" style="left:764px;width:92px;text-align:center;top:708px">Browse...</div>
<div class="t" style="left:261px;top:744px;letter-spacing:-0.680px;color:#8c8c8c;">Scale:</div>
<div style="position:absolute;left:385px;top:739px;width:143px;height:25px;background:#f3f3f3;border:1px solid #e4e4e4;border-radius:3px;box-sizing:border-box;"></div>
<div class="t" style="left:388px;top:744px;color:#8c8c8c;">0.01</div>
<div style="position:absolute;left:510px;top:741px;width:17px;height:20px;background:#f7f7f7;border:1px solid #e2e2e2;border-radius:2px;box-sizing:border-box;"></div>
<svg style="position:absolute;left:511px;top:741px" width="14" height="20"><path d="M3.5 8.5 L7 5 L10.5 8.5 Z M3.5 11.5 L7 15 L10.5 11.5 Z" fill="#8a8a8a"/></svg>
<div style="position:absolute;left:385px;top:776px;width:16px;height:16px;background:#f6f6f6;border:1px solid #c4c4c4;border-radius:3px;box-sizing:border-box;"></div>
<div class="t" style="left:407px;top:777px;color:#8c8c8c;">Invert</div>
<div class="t" style="left:216px;top:818px;letter-spacing:0.367px;">Normal Map</div>
<div style="position:absolute;left:307px;top:823px;width:549px;height:1px;background:#a3a3a3;"></div>
<div class="t" style="left:261px;top:850px;">File:</div>
<div style="position:absolute;left:385px;top:845px;width:370px;height:25px;background:#fff;border:1px solid #e6e6e6;border-bottom:1.5px solid #868686;border-radius:3px;box-sizing:border-box;"></div>
<div style="position:absolute;left:764px;top:845px;width:92px;height:26px;background:#fdfdfd;border:1px solid #d1d1d1;border-bottom-color:#bdbdbd;border-radius:4px;box-sizing:border-box;"></div>
<div class="t" style="left:764px;width:92px;text-align:center;top:850px">Browse...</div>
<div class="t" style="left:216px;top:894px;letter-spacing:0.245px;">Ambient Occlusion Map</div>
<div style="position:absolute;left:383px;top:899px;width:473px;height:1px;background:#fbfbfb;"></div>
<div class="t" style="left:261px;top:927px;">File:</div>
<div style="position:absolute;left:385px;top:921px;width:370px;height:25px;background:#fff;border:1px solid #e6e6e6;border-bottom:1.5px solid #868686;border-radius:3px;box-sizing:border-box;"></div>
<div style="position:absolute;left:764px;top:921px;width:92px;height:26px;background:#fdfdfd;border:1px solid #d1d1d1;border-bottom-color:#bdbdbd;border-radius:4px;box-sizing:border-box;"></div>
<div class="t" style="left:764px;width:92px;text-align:center;top:927px">Browse...</div>
<div style="position:absolute;left:78px;top:975px;width:106px;height:28px;background:#fdfdfd;border:1px solid #d1d1d1;border-bottom-color:#bdbdbd;border-radius:4px;box-sizing:border-box;"></div>
<div class="t" style="left:78px;width:106px;text-align:center;top:982px">Number Style...</div>
<div style="position:absolute;left:863px;top:975px;width:92px;height:28px;background:#fdfdfd;border:1px solid #0067c0;border-bottom-color:#0067c0;border-radius:4px;box-sizing:border-box;"></div>
<div class="t" style="left:863px;width:92px;text-align:center;top:982px">OK</div>
<div style="position:absolute;left:965px;top:975px;width:90px;height:28px;background:#fdfdfd;border:1px solid #d1d1d1;border-bottom-color:#bdbdbd;border-radius:4px;box-sizing:border-box;"></div>
<div class="t" style="left:965px;width:90px;text-align:center;top:982px">Cancel</div>
<div style="position:absolute;left:1066px;top:975px;width:102px;height:28px;background:#fdfdfd;border:1px solid #d1d1d1;border-bottom-color:#bdbdbd;border-radius:4px;box-sizing:border-box;"></div>
<div class="t" style="left:1066px;width:102px;text-align:center;top:982px">Add to Library</div>
<div style="position:absolute;left:1178px;top:975px;width:91px;height:28px;background:#fdfdfd;border:1px solid #d1d1d1;border-bottom-color:#bdbdbd;border-radius:4px;box-sizing:border-box;"></div>
<div class="t" style="left:1178px;width:91px;text-align:center;top:982px">Help</div>
<svg style="position:absolute;left:1270px;top:1003px" width="14" height="14"><rect x="9" y="1" width="2" height="2" fill="#b8b8b8"/><rect x="6" y="4" width="2" height="2" fill="#b8b8b8"/><rect x="9" y="4" width="2" height="2" fill="#b8b8b8"/><rect x="3" y="7" width="2" height="2" fill="#b8b8b8"/><rect x="6" y="7" width="2" height="2" fill="#b8b8b8"/><rect x="9" y="7" width="2" height="2" fill="#b8b8b8"/></svg>
<svg style="position:absolute;left:677px;top:190px" width="180" height="179"><defs><pattern id="bsw" width="89.2" height="29.7" patternUnits="userSpaceOnUse" x="0" y="4"><rect width="89.2" height="29.7" fill="#bd4331"/><rect x="0" y="2.23" width="44.60" height="10.39" fill="#000" opacity="0.04"/><rect x="44.60" y="17.82" width="44.60" height="8.91" fill="#fff" opacity="0.03"/><rect x="0" y="0.00" width="89.2" height="1.5" fill="#d6cfbf"/><rect x="0" y="1.50" width="89.2" height="0.7" fill="#6a2418" opacity="0.5"/><rect x="0" y="14.85" width="89.2" height="1.5" fill="#d6cfbf"/><rect x="0" y="16.35" width="89.2" height="0.7" fill="#6a2418" opacity="0.5"/><rect x="33.00" y="0" width="1.5" height="14.85" fill="#d6cfbf"/><rect x="77.60" y="0" width="1.5" height="14.85" fill="#d6cfbf"/><rect x="8.40" y="14.85" width="1.5" height="14.85" fill="#d6cfbf"/><rect x="53.00" y="14.85" width="1.5" height="14.85" fill="#d6cfbf"/></pattern><filter id="bn" x="0" y="0" width="100%" height="100%" color-interpolation-filters="sRGB"><feTurbulence type="fractalNoise" baseFrequency="0.25" numOctaves="2" seed="4" result="t"/><feColorMatrix in="t" type="matrix" values="0 0 0 0 0.3  0 0 0 0 0.08  0 0 0 0 0.05  0.5 0 0 0 -0.18" result="c"/><feComposite in="c" in2="SourceGraphic" operator="in"/></filter></defs><rect width="180" height="179" fill="url(#bsw)"/><rect width="180" height="179" fill="#000" filter="url(#bn)"/><rect x="0" y="0" width="1" height="179" fill="#111"/><rect x="179" y="0" width="1" height="179" fill="#111"/></svg>
<svg style="position:absolute;left:900px;top:44px" width="345" height="38" viewBox="900 44 345 38"><rect x="913.5" y="47.5" width="48" height="31" rx="3" fill="#c6def3" stroke="#9fd0f8"/><line x1="946.3" y1="48" x2="946.3" y2="78" stroke="#9fd0f8"/><rect x="1011.5" y="47.5" width="33" height="31" rx="3" fill="#cce6fb" stroke="#9fd0f8"/><rect x="1052.5" y="47.5" width="33" height="31" rx="3" fill="#cce6fb" stroke="#9fd0f8"/><path d="M918.2 65.4 L930.3 52.6 L930.3 65.4 Z" fill="#c07812"/><path d="M930.3 52.6 L942.3 64.6 L930.3 65.4 Z" fill="#f8e8a8" stroke="#c07812" stroke-width="1"/><rect x="918.5" y="66" width="12" height="10.6" fill="#7d7d7d" stroke="#1a6a8a" stroke-width="1"/><rect x="922" y="67.5" width="3.5" height="9" fill="#fff"/><rect x="930.8" y="64.7" width="12.0" height="11.899999999999991" fill="#fff" stroke="#333" stroke-width="1"/><path d="M933.3 71.2 L935.8 74.2 L940.8 67.2" stroke="#1a1a9a" stroke-width="1.4" fill="none"/><path d="M949.9 60.9 L958.9 60.9 L954.4 66.1 Z" fill="#000"/><rect x="973.5" y="51.5" width="24" height="24" fill="#9c9c9c" stroke="#5e5e5e" stroke-width="1.2"/><rect x="974.5" y="52.5" width="22" height="10" fill="#8a8a8a"/><path d="M976 54 L979 60 L983 58 Q985.5 55 988 58 L992 60 L995 54" stroke="#dcdcdc" stroke-width="1" fill="none"/><path d="M975 64 Q979 66 985.5 70 Q992 66 996 64" stroke="#f0f0f0" stroke-width="1.2" fill="none"/><path d="M1023.3 58.3 Q1024 54 1029 52.5 M1023.3 58.3 Q1029 56.5 1035.5 58.3 M1023.3 58.3 Q1025 65 1027.5 69 M1023.3 58.3 Q1018 66 1021 74.5" stroke="#111" stroke-width="1.3" fill="none"/><path d="M1026.5 51.2 L1031 51.5 L1029.5 55 Z M1033.5 55.5 L1037.5 58.3 L1033.5 60.5 Z M1025.5 68 L1028.8 70.5 L1028 66.5 Z M1018.5 72 L1021 76.5 L1023 72 Z" fill="#111"/><rect x="1028.4" y="64.4" width="12.199999999999818" height="12.199999999999989" fill="#fff" stroke="#333" stroke-width="1"/><path d="M1030.9 70.9 L1033.4 73.9 L1038.6 66.9" stroke="#1a1a9a" stroke-width="1.4" fill="none"/><path d="M1055 66 L1061.5 58 L1069 58 L1069 66 Z" fill="#fff" stroke="#1a7090" stroke-width="1.1"/><path d="M1070 57 L1072 57 L1081.5 66 L1070 66 Z" fill="#111"/><rect x="1071" y="66" width="10" height="3" fill="#fff"/><rect x="1056" y="67" width="13" height="9.5" fill="#f8e8b8" stroke="#d09830" stroke-width="1.3"/><rect x="1058.5" y="68.5" width="3.5" height="2.8" fill="#fff" stroke="#d09830" stroke-width="0.9"/><rect x="1068.5" y="52.2" width="2" height="24.4" fill="#7e7e7e"/><rect x="1069.5" y="64.7" width="12.200000000000045" height="11.899999999999991" fill="#fff" stroke="#333" stroke-width="1"/><path d="M1072.0 71.2 L1074.5 74.2 L1079.7 67.2" stroke="#1a1a9a" stroke-width="1.4" fill="none"/><path d="M1097 58.4 L1101.7 52.3 L1111.6 52.3 L1115.7 58.4 Z" fill="#1a6a90"/><rect x="1099.8" y="58.4" width="13.2" height="8.4" fill="#fff" stroke="#222" stroke-width="1.1"/><rect x="1102.5" y="60.5" width="3.2" height="2.8" fill="#fff" stroke="#333" stroke-width="0.8"/><rect x="1107.5" y="60.5" width="3" height="6.3" fill="#fff" stroke="#333" stroke-width="0.8"/><path d="M1106.4 69.5 L1111 75.3 L1121.6 60.7" stroke="#2ea84a" stroke-width="2.4" fill="none"/><path d="M1143.5 60 Q1143 71 1151 71 Q1159 71 1158.8 60 Q1151 56 1143.5 60 Z" fill="#fff" stroke="#111" stroke-width="1.3"/><path d="M1143.5 60 Q1151 63 1158.8 60" stroke="#111" stroke-width="1" fill="none"/><path d="M1143.6 61 Q1138 58.5 1138.3 62 Q1139 66 1144.5 67" stroke="#111" stroke-width="1.3" fill="none"/><path d="M1158.5 64 Q1161.5 63 1163.3 59.8" stroke="#111" stroke-width="1.4" fill="none"/><ellipse cx="1150.8" cy="57.5" rx="1.6" ry="1" fill="#111"/><path d="M1170.7 60.7 L1180 60.7 L1175.4 66 Z" fill="#000"/><path d="M1195.2 53.1 L1206.9 51.1 L1219.7 53.7 L1219.7 72.4 L1207.5 75.3 L1195.2 70.6 Z" fill="#f8e8a8" stroke="#111" stroke-width="1.3"/><path d="M1207.5 67 L1195.2 70.6 L1207.5 75.3 L1219.7 72.4 Z" fill="#f4c8c0"/><path d="M1198 70 L1210 74 M1201 69 L1214 73.5 M1204 68 L1217 72.5 M1207 67.5 L1219 71.5" stroke="#e05050" stroke-width="0.9"/><path d="M1195.2 53.1 L1207.5 56.6 L1219.7 53.7 M1207.5 56.6 L1207.5 67 M1195.2 70.6 L1207.5 67 L1219.7 72.4" stroke="#111" stroke-width="1.2" fill="none"/><path d="M1195.2 53.1 L1206.9 51.1 L1219.7 53.7 L1219.7 72.4 L1207.5 75.3 L1195.2 70.6 Z" fill="none" stroke="#111" stroke-width="1.4"/><path d="M1228 60.7 L1237.3 60.7 L1232.7 66 Z" fill="#000"/></svg>
<svg style="position:absolute;left:881px;top:87px" width="392" height="875" viewBox="0 0 392 875">
<defs>
<filter id="noise" x="0" y="0" width="100%" height="100%" color-interpolation-filters="sRGB"><feTurbulence type="fractalNoise" baseFrequency="0.38" numOctaves="2" seed="3" result="t"/><feColorMatrix in="t" type="matrix" values="2.0 0.4 0 0 -0.66  1.9 0.4 0 0 -0.66  1.8 0.4 0 0 -0.66  0 0 0 0 0.34" result="c"/><feComposite in="c" in2="SourceGraphic" operator="in"/></filter>
<filter id="noise2" x="0" y="0" width="100%" height="100%" color-interpolation-filters="sRGB"><feTurbulence type="fractalNoise" baseFrequency="0.05" numOctaves="2" seed="9" result="t"/><feColorMatrix in="t" type="matrix" values="1.2 0 0 0 -0.1  1.15 0 0 0 -0.1  1.1 0 0 0 -0.1  0 0 0 0 0.1" result="c"/><feComposite in="c" in2="SourceGraphic" operator="in"/></filter>
<filter id="tpn" x="0" y="0" width="100%" height="100%" color-interpolation-filters="sRGB"><feTurbulence type="fractalNoise" baseFrequency="0.5" numOctaves="2" seed="11" result="t"/><feColorMatrix in="t" type="matrix" values="2 0 0 0 -0.5  1.2 0 0 0 -0.35  1 0 0 0 -0.3  0 0 0 0 0.13" result="c"/><feComposite in="c" in2="SourceGraphic" operator="in"/></filter>
<linearGradient id="wallL" x1="0" y1="0" x2="1" y2="1"><stop offset="0" stop-color="#cac3b1"/><stop offset="0.5" stop-color="#c3bcaa"/><stop offset="1" stop-color="#b8b19f"/></linearGradient>
<linearGradient id="wallR" x1="0" y1="0" x2="0" y2="1"><stop offset="0" stop-color="#c4bdac"/><stop offset="1" stop-color="#bab3a2"/></linearGradient>
<linearGradient id="floorG" x1="0" y1="0" x2="0" y2="1"><stop offset="0" stop-color="#8f8a82"/><stop offset="0.5" stop-color="#8b867e"/><stop offset="1" stop-color="#8c877f"/></linearGradient>
<radialGradient id="shade" cx="0.62" cy="0.35" r="0.7"><stop offset="0" stop-color="#fff" stop-opacity="0.08"/><stop offset="0.6" stop-color="#000" stop-opacity="0"/><stop offset="1" stop-color="#000" stop-opacity="0.28"/></radialGradient>
<clipPath id="bodyclip"><path d="M88.0 391.0 C93.3 384.3 98.8 374.3 109.0 368.0 C119.2 361.7 134.5 356.2 149.0 353.0 C163.5 349.8 180.2 349.0 196.0 349.0 C211.8 349.0 229.3 351.0 244.0 353.0 C258.7 355.0 274.0 357.7 284.0 361.0 C294.0 364.3 299.0 367.7 304.0 373.0 C309.0 378.3 310.7 385.5 314.0 393.0 C317.3 400.5 321.0 408.8 324.0 418.0 C327.0 427.2 330.2 438.0 332.0 448.0 C333.8 458.0 334.5 468.0 335.0 478.0 C335.5 488.0 336.0 498.0 335.0 508.0 C334.0 518.0 332.5 528.8 329.0 538.0 C325.5 547.2 320.7 555.8 314.0 563.0 C307.3 570.2 299.8 575.7 289.0 581.0 C278.2 586.3 264.5 591.7 249.0 595.0 C233.5 598.3 213.5 600.7 196.0 601.0 C178.5 601.3 158.5 600.0 144.0 597.0 C129.5 594.0 119.5 589.0 109.0 583.0 C98.5 577.0 88.5 569.3 81.0 561.0 C73.5 552.7 68.0 542.7 64.0 533.0 C60.0 523.3 58.0 513.8 57.0 503.0 C56.0 492.2 56.3 479.7 58.0 468.0 C59.7 456.3 63.8 443.0 67.0 433.0 C70.2 423.0 73.5 415.0 77.0 408.0 C80.5 401.0 82.7 397.7 88.0 391.0 Z"/></clipPath>
<clipPath id="spoutclip"><path d="M249.0 563.0 C250.7 557.3 254.0 547.3 259.0 541.0 C264.0 534.7 271.8 528.0 279.0 525.0 C286.2 522.0 293.7 525.5 302.0 523.0 C310.3 520.5 321.2 514.5 329.0 510.0 C336.8 505.5 342.7 498.5 349.0 496.0 C355.3 493.5 359.8 493.8 367.0 495.0 C374.2 496.2 387.8 496.2 392.0 503.0 C396.2 509.8 397.8 530.2 392.0 536.0 C386.2 541.8 364.0 535.5 357.0 538.0 C350.0 540.5 353.5 546.0 350.0 551.0 C346.5 556.0 340.0 563.0 336.0 568.0 C332.0 573.0 331.8 577.8 326.0 581.0 C320.2 584.2 308.3 584.8 301.0 587.0 C293.7 589.2 287.3 593.7 282.0 594.0 C276.7 594.3 274.5 592.2 269.0 589.0 C263.5 585.8 252.3 579.3 249.0 575.0 C245.7 570.7 247.3 568.7 249.0 563.0 Z"/></clipPath>
<clipPath id="lidclip"><path d="M97.0 397.0 C97.0 391.2 105.3 383.3 114.0 378.0 C122.7 372.7 135.2 368.2 149.0 365.0 C162.8 361.8 181.2 359.3 197.0 359.0 C212.8 358.7 230.0 360.3 244.0 363.0 C258.0 365.7 271.8 369.3 281.0 375.0 C290.2 380.7 299.3 390.7 299.0 397.0 C298.7 403.3 289.0 409.0 279.0 413.0 C269.0 417.0 252.7 419.3 239.0 421.0 C225.3 422.7 211.2 423.0 197.0 423.0 C182.8 423.0 167.8 422.7 154.0 421.0 C140.2 419.3 123.5 417.0 114.0 413.0 C104.5 409.0 97.0 402.8 97.0 397.0 Z"/></clipPath>
</defs>
<polygon points="0,0 299,0 272,342 0,395" fill="url(#wallL)"/>
<polygon points="299,0 392,0 392,395 272,342" fill="url(#wallR)"/>
<line x1="299" y1="0" x2="272" y2="342" stroke="#aea795" stroke-width="1" opacity="0.35"/>
<polygon points="0,395 272,342 392,395 392,875 0,875" fill="url(#floorG)"/>
<polygon points="0,395 272,342 392,395 392,875 0,875" fill="#000" filter="url(#noise)"/>
<polygon points="0,395 272,342 392,395 392,875 0,875" fill="#000" filter="url(#noise2)"/>
<path d="M105.0 365.0 C102.3 362.5 105.2 353.3 108.0 350.0 C110.8 346.7 117.3 345.5 122.0 345.0 C126.7 344.5 133.0 344.8 136.0 347.0 C139.0 349.2 142.0 355.0 140.0 358.0 C138.0 361.0 129.8 363.8 124.0 365.0 C118.2 366.2 107.7 367.5 105.0 365.0 Z" fill="#c0462f"/>
<path d="M111 353 Q124 347 137 353" stroke="#d9d2c3" stroke-width="1.4" fill="none"/>
<path d="M88.0 391.0 C93.3 384.3 98.8 374.3 109.0 368.0 C119.2 361.7 134.5 356.2 149.0 353.0 C163.5 349.8 180.2 349.0 196.0 349.0 C211.8 349.0 229.3 351.0 244.0 353.0 C258.7 355.0 274.0 357.7 284.0 361.0 C294.0 364.3 299.0 367.7 304.0 373.0 C309.0 378.3 310.7 385.5 314.0 393.0 C317.3 400.5 321.0 408.8 324.0 418.0 C327.0 427.2 330.2 438.0 332.0 448.0 C333.8 458.0 334.5 468.0 335.0 478.0 C335.5 488.0 336.0 498.0 335.0 508.0 C334.0 518.0 332.5 528.8 329.0 538.0 C325.5 547.2 320.7 555.8 314.0 563.0 C307.3 570.2 299.8 575.7 289.0 581.0 C278.2 586.3 264.5 591.7 249.0 595.0 C233.5 598.3 213.5 600.7 196.0 601.0 C178.5 601.3 158.5 600.0 144.0 597.0 C129.5 594.0 119.5 589.0 109.0 583.0 C98.5 577.0 88.5 569.3 81.0 561.0 C73.5 552.7 68.0 542.7 64.0 533.0 C60.0 523.3 58.0 513.8 57.0 503.0 C56.0 492.2 56.3 479.7 58.0 468.0 C59.7 456.3 63.8 443.0 67.0 433.0 C70.2 423.0 73.5 415.0 77.0 408.0 C80.5 401.0 82.7 397.7 88.0 391.0 Z" fill="#c44e37"/>
<g clip-path="url(#bodyclip)">
<path d="M61.6 371.2 L62.0 375.5 L63.3 379.6 L65.3 383.8 L68.2 387.9 L71.8 391.8 L76.2 395.6 L81.4 399.3 L87.3 402.8 L93.8 406.2 L101.0 409.3 L108.7 412.1 L117.0 414.7 L125.8 417.1 L135.0 419.1 L144.6 420.9 L154.5 422.4 L164.6 423.5 L175.0 424.3 L185.5 424.8 L196.0 425.0 L206.5 424.8 L217.0 424.3 L227.4 423.5 L237.5 422.4 L247.4 420.9 L257.0 419.1 L266.2 417.1 L275.0 414.7 L283.3 412.1 L291.0 409.3 L298.2 406.2 L304.7 402.8 L310.6 399.3 L315.8 395.6 L320.2 391.8 L323.8 387.9 L326.7 383.8 L328.7 379.6 L330.0 375.5 L330.4 371.2" stroke="#d2ccbd" stroke-width="2.3" fill="none"/>
<path d="M51.1 390.2 L51.5 395.2 L52.9 400.2 L55.1 405.1 L58.2 409.9 L62.1 414.6 L66.9 419.2 L72.5 423.6 L78.8 427.7 L85.8 431.7 L93.5 435.3 L101.9 438.7 L110.8 441.8 L120.3 444.6 L130.2 447.1 L140.5 449.1 L151.2 450.9 L162.2 452.2 L173.3 453.2 L184.6 453.8 L196.0 454.0 L207.4 453.8 L218.7 453.2 L229.8 452.2 L240.8 450.9 L251.5 449.1 L261.8 447.1 L271.7 444.6 L281.2 441.8 L290.1 438.7 L298.5 435.3 L306.2 431.7 L313.2 427.7 L319.5 423.6 L325.1 419.2 L329.9 414.6 L333.8 409.9 L336.9 405.1 L339.1 400.2 L340.5 395.2 L340.9 390.2" stroke="#d2ccbd" stroke-width="2.3" fill="none"/>
<path d="M46.9 411.9 L47.4 417.2 L48.7 422.4 L51.0 427.6 L54.2 432.6 L58.2 437.6 L63.2 442.4 L68.9 447.0 L75.4 451.3 L82.6 455.5 L90.6 459.3 L99.2 462.9 L108.4 466.2 L118.1 469.1 L128.3 471.7 L138.9 473.9 L149.9 475.7 L161.2 477.1 L172.7 478.2 L184.3 478.8 L196.0 479.0 L207.7 478.8 L219.3 478.2 L230.8 477.1 L242.1 475.7 L253.1 473.9 L263.7 471.7 L273.9 469.1 L283.6 466.2 L292.8 462.9 L301.4 459.3 L309.4 455.5 L316.6 451.3 L323.1 447.0 L328.8 442.4 L333.8 437.6 L337.8 432.6 L341.0 427.6 L343.3 422.4 L344.6 417.2 L345.1 411.9" stroke="#d2ccbd" stroke-width="2.3" fill="none"/>
<path d="M45.9 433.9 L46.3 439.4 L47.7 444.7 L50.0 450.1 L53.2 455.3 L57.3 460.4 L62.2 465.3 L68.0 470.0 L74.5 474.5 L81.8 478.8 L89.8 482.8 L98.5 486.5 L107.7 489.8 L117.5 492.8 L127.8 495.5 L138.5 497.7 L149.6 499.6 L160.9 501.1 L172.5 502.1 L184.2 502.8 L196.0 503.0 L207.8 502.8 L219.5 502.1 L231.1 501.1 L242.4 499.6 L253.5 497.7 L264.2 495.5 L274.5 492.8 L284.3 489.8 L293.5 486.5 L302.2 482.8 L310.2 478.8 L317.5 474.5 L324.0 470.0 L329.8 465.3 L334.7 460.4 L338.8 455.3 L342.0 450.1 L344.3 444.7 L345.7 439.4 L346.2 433.9" stroke="#d2ccbd" stroke-width="2.3" fill="none"/>
<path d="M46.9 455.9 L47.4 461.4 L48.7 466.9 L51.0 472.3 L54.2 477.6 L58.2 482.7 L63.2 487.7 L68.9 492.5 L75.4 497.1 L82.6 501.4 L90.6 505.5 L99.2 509.2 L108.4 512.6 L118.1 515.7 L128.3 518.4 L138.9 520.7 L149.9 522.6 L161.2 524.1 L172.7 525.1 L184.3 525.8 L196.0 526.0 L207.7 525.8 L219.3 525.1 L230.8 524.1 L242.1 522.6 L253.1 520.7 L263.7 518.4 L273.9 515.7 L283.6 512.6 L292.8 509.2 L301.4 505.5 L309.4 501.4 L316.6 497.1 L323.1 492.5 L328.8 487.7 L333.8 482.7 L337.8 477.6 L341.0 472.3 L343.3 466.9 L344.6 461.4 L345.1 455.9" stroke="#d2ccbd" stroke-width="2.3" fill="none"/>
<path d="M51.1 478.4 L51.5 483.9 L52.9 489.3 L55.1 494.7 L58.2 499.9 L62.1 505.1 L66.9 510.0 L72.5 514.8 L78.8 519.3 L85.8 523.6 L93.5 527.6 L101.9 531.3 L110.8 534.7 L120.3 537.8 L130.2 540.4 L140.5 542.7 L151.2 544.6 L162.2 546.1 L173.3 547.1 L184.6 547.8 L196.0 548.0 L207.4 547.8 L218.7 547.1 L229.8 546.1 L240.8 544.6 L251.5 542.7 L261.8 540.4 L271.7 537.8 L281.2 534.7 L290.1 531.3 L298.5 527.6 L306.2 523.6 L313.2 519.3 L319.5 514.8 L325.1 510.0 L329.9 505.1 L333.8 499.9 L336.9 494.7 L339.1 489.3 L340.5 483.9 L340.9 478.4" stroke="#d2ccbd" stroke-width="2.3" fill="none"/>
<path d="M57.4 501.1 L57.8 506.4 L59.1 511.7 L61.2 516.9 L64.2 522.1 L68.0 527.1 L72.5 531.9 L77.8 536.6 L83.9 541.0 L90.6 545.2 L98.0 549.1 L106.0 552.7 L114.5 556.0 L123.6 559.0 L133.1 561.6 L143.0 563.8 L153.2 565.7 L163.6 567.1 L174.3 568.2 L185.1 568.8 L196.0 569.0 L206.9 568.8 L217.7 568.2 L228.4 567.1 L238.8 565.7 L249.0 563.8 L258.9 561.6 L268.4 559.0 L277.5 556.0 L286.0 552.7 L294.0 549.1 L301.4 545.2 L308.1 541.0 L314.2 536.6 L319.5 531.9 L324.0 527.1 L327.8 522.1 L330.8 516.9 L332.9 511.7 L334.2 506.4 L334.6 501.1" stroke="#d2ccbd" stroke-width="2.3" fill="none"/>
<path d="M65.8 521.9 L66.2 527.0 L67.4 532.1 L69.4 537.1 L72.2 542.0 L75.7 546.8 L80.0 551.5 L85.0 555.9 L90.7 560.2 L97.0 564.2 L103.9 567.9 L111.4 571.4 L119.5 574.6 L128.0 577.4 L136.9 579.9 L146.2 582.0 L155.8 583.8 L165.6 585.2 L175.6 586.2 L185.8 586.8 L196.0 587.0 L206.2 586.8 L216.4 586.2 L226.4 585.2 L236.2 583.8 L245.8 582.0 L255.1 579.9 L264.0 577.4 L272.5 574.6 L280.6 571.4 L288.1 567.9 L295.0 564.2 L301.3 560.2 L307.0 555.9 L312.0 551.5 L316.3 546.8 L319.8 542.0 L322.6 537.1 L324.6 532.1 L325.8 527.0 L326.2 521.9" stroke="#d2ccbd" stroke-width="2.3" fill="none"/>
<path d="M75.2 544.6 L75.6 549.4 L76.7 554.1 L78.6 558.7 L81.2 563.3 L84.4 567.7 L88.4 572.0 L93.0 576.2 L98.3 580.1 L104.2 583.8 L110.6 587.3 L117.6 590.5 L125.0 593.5 L132.9 596.1 L141.2 598.4 L149.8 600.4 L158.7 602.0 L167.8 603.3 L177.1 604.3 L186.5 604.8 L196.0 605.0 L205.5 604.8 L214.9 604.3 L224.2 603.3 L233.3 602.0 L242.2 600.4 L250.8 598.4 L259.1 596.1 L267.0 593.5 L274.4 590.5 L281.4 587.3 L287.8 583.8 L293.7 580.1 L299.0 576.2 L303.6 572.0 L307.6 567.7 L310.8 563.3 L313.4 558.7 L315.3 554.1 L316.4 549.4 L316.8 544.6" stroke="#d2ccbd" stroke-width="2.3" fill="none"/>
<line x1="63.3" y1="379.6" x2="52.9" y2="400.2" stroke="#d2ccbd" stroke-width="2.3"/>
<line x1="108.7" y1="412.1" x2="101.9" y2="438.7" stroke="#d2ccbd" stroke-width="2.3"/>
<line x1="196.0" y1="425.0" x2="196.0" y2="454.0" stroke="#d2ccbd" stroke-width="2.3"/>
<line x1="283.3" y1="412.1" x2="290.1" y2="438.7" stroke="#d2ccbd" stroke-width="2.3"/>
<line x1="328.7" y1="379.6" x2="339.1" y2="400.2" stroke="#d2ccbd" stroke-width="2.3"/>
<line x1="72.5" y1="423.6" x2="68.9" y2="447.0" stroke="#d2ccbd" stroke-width="2.3"/>
<line x1="151.2" y1="450.9" x2="149.9" y2="475.7" stroke="#d2ccbd" stroke-width="2.3"/>
<line x1="240.8" y1="450.9" x2="242.1" y2="475.7" stroke="#d2ccbd" stroke-width="2.3"/>
<line x1="319.5" y1="423.6" x2="323.1" y2="447.0" stroke="#d2ccbd" stroke-width="2.3"/>
<line x1="48.7" y1="422.4" x2="47.7" y2="444.7" stroke="#d2ccbd" stroke-width="2.3"/>
<line x1="99.2" y1="462.9" x2="98.5" y2="486.5" stroke="#d2ccbd" stroke-width="2.3"/>
<line x1="196.0" y1="479.0" x2="196.0" y2="503.0" stroke="#d2ccbd" stroke-width="2.3"/>
<line x1="292.8" y1="462.9" x2="293.5" y2="486.5" stroke="#d2ccbd" stroke-width="2.3"/>
<line x1="343.3" y1="422.4" x2="344.3" y2="444.7" stroke="#d2ccbd" stroke-width="2.3"/>
<line x1="68.0" y1="470.0" x2="68.9" y2="492.5" stroke="#d2ccbd" stroke-width="2.3"/>
<line x1="149.6" y1="499.6" x2="149.9" y2="522.6" stroke="#d2ccbd" stroke-width="2.3"/>
<line x1="242.4" y1="499.6" x2="242.1" y2="522.6" stroke="#d2ccbd" stroke-width="2.3"/>
<line x1="324.0" y1="470.0" x2="323.1" y2="492.5" stroke="#d2ccbd" stroke-width="2.3"/>
<line x1="48.7" y1="466.9" x2="52.9" y2="489.3" stroke="#d2ccbd" stroke-width="2.3"/>
<line x1="99.2" y1="509.2" x2="101.9" y2="531.3" stroke="#d2ccbd" stroke-width="2.3"/>
<line x1="196.0" y1="526.0" x2="196.0" y2="548.0" stroke="#d2ccbd" stroke-width="2.3"/>
<line x1="292.8" y1="509.2" x2="290.1" y2="531.3" stroke="#d2ccbd" stroke-width="2.3"/>
<line x1="343.3" y1="466.9" x2="339.1" y2="489.3" stroke="#d2ccbd" stroke-width="2.3"/>
<line x1="72.5" y1="514.8" x2="77.8" y2="536.6" stroke="#d2ccbd" stroke-width="2.3"/>
<line x1="151.2" y1="544.6" x2="153.2" y2="565.7" stroke="#d2ccbd" stroke-width="2.3"/>
<line x1="240.8" y1="544.6" x2="238.8" y2="565.7" stroke="#d2ccbd" stroke-width="2.3"/>
<line x1="319.5" y1="514.8" x2="314.2" y2="536.6" stroke="#d2ccbd" stroke-width="2.3"/>
<line x1="59.1" y1="511.7" x2="67.4" y2="532.1" stroke="#d2ccbd" stroke-width="2.3"/>
<line x1="106.0" y1="552.7" x2="111.4" y2="571.4" stroke="#d2ccbd" stroke-width="2.3"/>
<line x1="196.0" y1="569.0" x2="196.0" y2="587.0" stroke="#d2ccbd" stroke-width="2.3"/>
<line x1="286.0" y1="552.7" x2="280.6" y2="571.4" stroke="#d2ccbd" stroke-width="2.3"/>
<line x1="332.9" y1="511.7" x2="324.6" y2="532.1" stroke="#d2ccbd" stroke-width="2.3"/>
<line x1="85.0" y1="555.9" x2="93.0" y2="576.2" stroke="#d2ccbd" stroke-width="2.3"/>
<line x1="155.8" y1="583.8" x2="158.7" y2="602.0" stroke="#d2ccbd" stroke-width="2.3"/>
<line x1="236.2" y1="583.8" x2="233.3" y2="602.0" stroke="#d2ccbd" stroke-width="2.3"/>
<line x1="307.0" y1="555.9" x2="299.0" y2="576.2" stroke="#d2ccbd" stroke-width="2.3"/>
<path d="M88.0 391.0 C93.3 384.3 98.8 374.3 109.0 368.0 C119.2 361.7 134.5 356.2 149.0 353.0 C163.5 349.8 180.2 349.0 196.0 349.0 C211.8 349.0 229.3 351.0 244.0 353.0 C258.7 355.0 274.0 357.7 284.0 361.0 C294.0 364.3 299.0 367.7 304.0 373.0 C309.0 378.3 310.7 385.5 314.0 393.0 C317.3 400.5 321.0 408.8 324.0 418.0 C327.0 427.2 330.2 438.0 332.0 448.0 C333.8 458.0 334.5 468.0 335.0 478.0 C335.5 488.0 336.0 498.0 335.0 508.0 C334.0 518.0 332.5 528.8 329.0 538.0 C325.5 547.2 320.7 555.8 314.0 563.0 C307.3 570.2 299.8 575.7 289.0 581.0 C278.2 586.3 264.5 591.7 249.0 595.0 C233.5 598.3 213.5 600.7 196.0 601.0 C178.5 601.3 158.5 600.0 144.0 597.0 C129.5 594.0 119.5 589.0 109.0 583.0 C98.5 577.0 88.5 569.3 81.0 561.0 C73.5 552.7 68.0 542.7 64.0 533.0 C60.0 523.3 58.0 513.8 57.0 503.0 C56.0 492.2 56.3 479.7 58.0 468.0 C59.7 456.3 63.8 443.0 67.0 433.0 C70.2 423.0 73.5 415.0 77.0 408.0 C80.5 401.0 82.7 397.7 88.0 391.0 Z" fill="#000" filter="url(#tpn)"/>
</g>
<path d="M88.0 391.0 C93.3 384.3 98.8 374.3 109.0 368.0 C119.2 361.7 134.5 356.2 149.0 353.0 C163.5 349.8 180.2 349.0 196.0 349.0 C211.8 349.0 229.3 351.0 244.0 353.0 C258.7 355.0 274.0 357.7 284.0 361.0 C294.0 364.3 299.0 367.7 304.0 373.0 C309.0 378.3 310.7 385.5 314.0 393.0 C317.3 400.5 321.0 408.8 324.0 418.0 C327.0 427.2 330.2 438.0 332.0 448.0 C333.8 458.0 334.5 468.0 335.0 478.0 C335.5 488.0 336.0 498.0 335.0 508.0 C334.0 518.0 332.5 528.8 329.0 538.0 C325.5 547.2 320.7 555.8 314.0 563.0 C307.3 570.2 299.8 575.7 289.0 581.0 C278.2 586.3 264.5 591.7 249.0 595.0 C233.5 598.3 213.5 600.7 196.0 601.0 C178.5 601.3 158.5 600.0 144.0 597.0 C129.5 594.0 119.5 589.0 109.0 583.0 C98.5 577.0 88.5 569.3 81.0 561.0 C73.5 552.7 68.0 542.7 64.0 533.0 C60.0 523.3 58.0 513.8 57.0 503.0 C56.0 492.2 56.3 479.7 58.0 468.0 C59.7 456.3 63.8 443.0 67.0 433.0 C70.2 423.0 73.5 415.0 77.0 408.0 C80.5 401.0 82.7 397.7 88.0 391.0 Z" fill="url(#shade)"/>
<ellipse cx="195" cy="381" rx="112" ry="35" fill="#c44e37"/>
<path d="M85 383 A110 33 0 0 1 305 383" stroke="#d2ccbd" stroke-width="1.5" fill="none"/>
<ellipse cx="196" cy="387" rx="107" ry="37" fill="#3b2620"/>
<ellipse cx="196" cy="390" rx="101" ry="38" fill="#d2ccbd"/>
<ellipse cx="196" cy="390" rx="100.1" ry="37.1" fill="#c64d36" stroke="#d2ccbd" stroke-width="1.7"/>
<ellipse cx="196" cy="387.8" rx="91.1" ry="32.9" fill="#c24a33" stroke="#d2ccbd" stroke-width="1.7"/>
<ellipse cx="196" cy="383.4" rx="77.1" ry="26.5" fill="#c64f38" stroke="#d2ccbd" stroke-width="1.7"/>
<ellipse cx="196" cy="377" rx="61.1" ry="18.1" fill="#c34b34" stroke="#d2ccbd" stroke-width="1.7"/>
<ellipse cx="196" cy="371.8" rx="45.1" ry="10.9" fill="#c74f38" stroke="#d2ccbd" stroke-width="1.7"/>
<ellipse cx="196" cy="368.7" rx="31.1" ry="5.8" fill="#c24a33" stroke="#d2ccbd" stroke-width="1.7"/>
<line x1="297.0" y1="390.0" x2="288.0" y2="387.8" stroke="#d2ccbd" stroke-width="1.6"/>
<line x1="277.7" y1="412.3" x2="270.4" y2="407.7" stroke="#d2ccbd" stroke-width="1.6"/>
<line x1="227.2" y1="426.1" x2="224.4" y2="419.9" stroke="#d2ccbd" stroke-width="1.6"/>
<line x1="164.8" y1="426.1" x2="167.6" y2="419.9" stroke="#d2ccbd" stroke-width="1.6"/>
<line x1="114.3" y1="412.3" x2="121.6" y2="407.7" stroke="#d2ccbd" stroke-width="1.6"/>
<line x1="95.0" y1="390.0" x2="104.0" y2="387.8" stroke="#d2ccbd" stroke-width="1.6"/>
<line x1="114.3" y1="367.7" x2="121.6" y2="367.9" stroke="#d2ccbd" stroke-width="1.6"/>
<line x1="164.8" y1="353.9" x2="167.6" y2="355.7" stroke="#d2ccbd" stroke-width="1.6"/>
<line x1="227.2" y1="353.9" x2="224.4" y2="355.7" stroke="#d2ccbd" stroke-width="1.6"/>
<line x1="277.7" y1="367.7" x2="270.4" y2="367.9" stroke="#d2ccbd" stroke-width="1.6"/>
<line x1="281.0" y1="400.7" x2="268.1" y2="393.9" stroke="#d2ccbd" stroke-width="1.6"/>
<line x1="231.2" y1="419.0" x2="225.8" y2="408.7" stroke="#d2ccbd" stroke-width="1.6"/>
<line x1="160.8" y1="419.0" x2="166.2" y2="408.7" stroke="#d2ccbd" stroke-width="1.6"/>
<line x1="111.0" y1="400.7" x2="123.9" y2="393.9" stroke="#d2ccbd" stroke-width="1.6"/>
<line x1="111.0" y1="374.9" x2="123.9" y2="372.9" stroke="#d2ccbd" stroke-width="1.6"/>
<line x1="160.8" y1="356.6" x2="166.2" y2="358.1" stroke="#d2ccbd" stroke-width="1.6"/>
<line x1="231.2" y1="356.6" x2="225.8" y2="358.1" stroke="#d2ccbd" stroke-width="1.6"/>
<line x1="281.0" y1="374.9" x2="268.1" y2="372.9" stroke="#d2ccbd" stroke-width="1.6"/>
<line x1="274.0" y1="383.4" x2="258.0" y2="377.0" stroke="#d2ccbd" stroke-width="1.6"/>
<line x1="251.2" y1="402.8" x2="239.8" y2="390.4" stroke="#d2ccbd" stroke-width="1.6"/>
<line x1="196.0" y1="410.8" x2="196.0" y2="396.0" stroke="#d2ccbd" stroke-width="1.6"/>
<line x1="140.8" y1="402.8" x2="152.2" y2="390.4" stroke="#d2ccbd" stroke-width="1.6"/>
<line x1="118.0" y1="383.4" x2="134.0" y2="377.0" stroke="#d2ccbd" stroke-width="1.6"/>
<line x1="140.8" y1="364.0" x2="152.2" y2="363.6" stroke="#d2ccbd" stroke-width="1.6"/>
<line x1="196.0" y1="356.0" x2="196.0" y2="358.0" stroke="#d2ccbd" stroke-width="1.6"/>
<line x1="251.2" y1="364.0" x2="239.8" y2="363.6" stroke="#d2ccbd" stroke-width="1.6"/>
<line x1="249.7" y1="386.5" x2="235.8" y2="377.7" stroke="#d2ccbd" stroke-width="1.6"/>
<line x1="196.0" y1="396.0" x2="196.0" y2="383.6" stroke="#d2ccbd" stroke-width="1.6"/>
<line x1="142.3" y1="386.5" x2="156.2" y2="377.7" stroke="#d2ccbd" stroke-width="1.6"/>
<line x1="142.3" y1="367.5" x2="156.2" y2="365.9" stroke="#d2ccbd" stroke-width="1.6"/>
<line x1="196.0" y1="358.0" x2="196.0" y2="360.0" stroke="#d2ccbd" stroke-width="1.6"/>
<line x1="249.7" y1="367.5" x2="235.8" y2="365.9" stroke="#d2ccbd" stroke-width="1.6"/>
<line x1="242.0" y1="371.8" x2="228.0" y2="368.7" stroke="#d2ccbd" stroke-width="1.6"/>
<line x1="219.0" y1="382.0" x2="212.0" y2="374.5" stroke="#d2ccbd" stroke-width="1.6"/>
<line x1="173.0" y1="382.0" x2="180.0" y2="374.5" stroke="#d2ccbd" stroke-width="1.6"/>
<line x1="150.0" y1="371.8" x2="164.0" y2="368.7" stroke="#d2ccbd" stroke-width="1.6"/>
<line x1="173.0" y1="361.6" x2="180.0" y2="362.9" stroke="#d2ccbd" stroke-width="1.6"/>
<line x1="219.0" y1="361.6" x2="212.0" y2="362.9" stroke="#d2ccbd" stroke-width="1.6"/>
<ellipse cx="196" cy="390" rx="101" ry="38" fill="#000" filter="url(#tpn)"/>
<ellipse cx="196" cy="390" rx="101" ry="38" fill="url(#shade)" opacity="0.5"/>
<path d="M177 349 L215 349 Q209 359 210 368 L183 368 Q184 359 177 349 Z" fill="#b9452f"/>
<path d="M181 359 Q196 363 212 359" stroke="#d2ccbd" stroke-width="1.3" fill="none"/>
<path d="M168 340 Q168 327 196 326.5 Q225 327 224.5 340 Q219 350 196 350.5 Q173 350 168 340 Z" fill="#c64d36"/>
<path d="M171 333 Q194 325 221 338 M177 345 Q199 338 223 343 M189 327 L206 349 M209 329 L222 343" stroke="#d2ccbd" stroke-width="1.5" fill="none"/>
<path d="M249.0 563.0 C250.7 557.3 254.0 547.3 259.0 541.0 C264.0 534.7 271.8 528.0 279.0 525.0 C286.2 522.0 293.7 525.5 302.0 523.0 C310.3 520.5 321.2 514.5 329.0 510.0 C336.8 505.5 342.7 498.5 349.0 496.0 C355.3 493.5 359.8 493.8 367.0 495.0 C374.2 496.2 387.8 496.2 392.0 503.0 C396.2 509.8 397.8 530.2 392.0 536.0 C386.2 541.8 364.0 535.5 357.0 538.0 C350.0 540.5 353.5 546.0 350.0 551.0 C346.5 556.0 340.0 563.0 336.0 568.0 C332.0 573.0 331.8 577.8 326.0 581.0 C320.2 584.2 308.3 584.8 301.0 587.0 C293.7 589.2 287.3 593.7 282.0 594.0 C276.7 594.3 274.5 592.2 269.0 589.0 C263.5 585.8 252.3 579.3 249.0 575.0 C245.7 570.7 247.3 568.7 249.0 563.0 Z" fill="#c44b34"/>
<g clip-path="url(#spoutclip)">
<path d="M249.0 563.0 C250.7 557.3 254.0 547.3 259.0 541.0 C264.0 534.7 271.8 528.0 279.0 525.0 C286.2 522.0 293.7 525.5 302.0 523.0 C310.3 520.5 321.2 514.5 329.0 510.0 C336.8 505.5 342.7 498.5 349.0 496.0 C355.3 493.5 359.8 493.8 367.0 495.0 C374.2 496.2 387.8 496.2 392.0 503.0 C396.2 509.8 397.8 530.2 392.0 536.0 C386.2 541.8 364.0 535.5 357.0 538.0 C350.0 540.5 353.5 546.0 350.0 551.0 C346.5 556.0 340.0 563.0 336.0 568.0 C332.0 573.0 331.8 577.8 326.0 581.0 C320.2 584.2 308.3 584.8 301.0 587.0 C293.7 589.2 287.3 593.7 282.0 594.0 C276.7 594.3 274.5 592.2 269.0 589.0 C263.5 585.8 252.3 579.3 249.0 575.0 C245.7 570.7 247.3 568.7 249.0 563.0 Z" fill="#000" filter="url(#tpn)"/>
<path d="M279.4 525.0 L260.2 544.4 L253.3 562.3 L271.2 569.2 L283.6 593.0" stroke="#d2ccbd" stroke-width="2" fill="none"/>
<path d="M304.2 525.0 L287.7 550.0 L287.7 569.2 L301.4 587.0" stroke="#d2ccbd" stroke-width="2" fill="none"/>
<path d="M330.3 511.0 L316.5 528.0 L315.2 537.6 L329.0 550.0 L350.9 550.0 L357.0 538.0" stroke="#d2ccbd" stroke-width="2" fill="none"/>
<path d="M349.5 496.4 L345.4 506.0 L355.0 515.6 L392.0 513.0" stroke="#d2ccbd" stroke-width="2" fill="none"/>
<path d="M315.0 563.7 L329.0 550.0" stroke="#d2ccbd" stroke-width="2" fill="none"/>
<path d="M271.2 569.2 L287.7 569.2" stroke="#d2ccbd" stroke-width="2" fill="none"/>
<path d="M287.7 550.0 L316.5 528.0" stroke="#d2ccbd" stroke-width="2" fill="none"/>
</g>
<path d="M361.0 501.0 L392.0 507.0 L392.0 524.0 L377.0 518.0 L364.0 508.0 Z" fill="#5e2419"/>
<rect x="0.5" y="0.5" width="391" height="874" fill="none" stroke="#7d8590" stroke-width="1"/>
<rect x="0" y="0" width="1" height="875" fill="#f8f8f8"/>
</svg>

<div style="position:absolute;left:319px;top:423px;width:211px;height:29px;background:#ffff30;mix-blend-mode:multiply;clip-path:polygon(0 0,100% 5px,100% 29px,0 23px)"></div>
<div style="position:absolute;left:330px;top:457px;width:221px;height:31px;background:#ffff30;mix-blend-mode:multiply;clip-path:polygon(0 0,100% 7px,100% 31px,0 24px)"></div>

</body></html>
